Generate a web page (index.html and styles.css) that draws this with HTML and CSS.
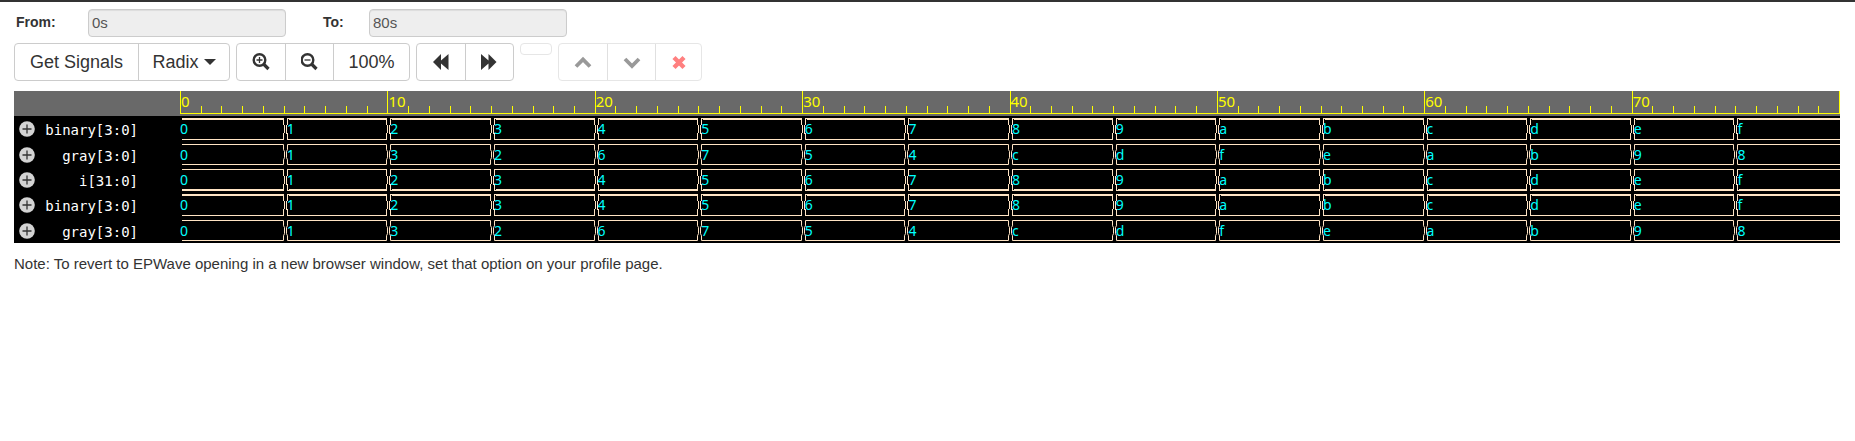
FILE: index.html
```
<!DOCTYPE html>
<html lang="en">
<head>
<meta charset="utf-8">
<title>EPWave</title>
<link rel="stylesheet" href="styles.css">
</head>
<body>
<main class="viewer">
  <form class="range">
    <label class="range-label" for="from">From:</label>
    <input class="range-input" id="from" type="text" value="0s" readonly>
    <label class="range-label range-label-to" for="to">To:</label>
    <input class="range-input" id="to" type="text" value="80s" readonly>
  </form>
  <div class="toolbar">
    <div class="group">
      <button class="btn btn-signals" type="button">Get Signals</button>
      <button class="btn btn-radix" type="button">Radix <span class="caret"></span></button>
    </div>
    <div class="group">
      <button class="btn btn-icon" type="button" aria-label="Zoom in"><svg class="icon" viewBox="0 0 18 18"><circle cx="7.500" cy="7" r="5.800" fill="none" stroke="#333" stroke-width="2.400"/><path d="M11.500 11l5 5" stroke="#333" stroke-width="3.200"/><path d="M4.500 7h6M7.500 4v6" stroke="#333" stroke-width="1.300"/></svg></button>
      <button class="btn btn-icon" type="button" aria-label="Zoom out"><svg class="icon" viewBox="0 0 18 18"><circle cx="6.500" cy="7" r="5.800" fill="none" stroke="#333" stroke-width="2.400"/><path d="M10.500 11l5 5" stroke="#333" stroke-width="3.200"/><path d="M3.500 7h6" stroke="#333" stroke-width="1.300"/></svg></button>
      <button class="btn btn-full" type="button">100%</button>
    </div>
    <div class="group">
      <button class="btn btn-icon" type="button" aria-label="Back"><svg class="icon" viewBox="0 0 18 18"><path d="M9 2v5.500L16.500 1v16L9 10.500V17L1 9 9 1z" fill="#333"/></svg></button>
      <button class="btn btn-icon" type="button" aria-label="Forward"><svg class="icon" viewBox="0 0 18 18"><path d="M7.500 2v5.500L0 1v16l7.500-6.500V17l8-8-8-8z" fill="#333"/></svg></button>
    </div>
    <button class="btn-empty" type="button" aria-label="Cursor" disabled></button>
    <div class="group group-disabled">
      <button class="btn btn-icon" type="button" aria-label="Move up" disabled><svg class="icon" viewBox="0 0 18 18"><path d="M2 13.500l7-7 7 7" fill="none" stroke="#999" stroke-width="3.800"/></svg></button>
      <button class="btn btn-icon" type="button" aria-label="Move down" disabled><svg class="icon" viewBox="0 0 18 18"><path d="M2 6l7 7 7-7" fill="none" stroke="#999" stroke-width="3.800"/></svg></button>
      <button class="btn btn-remove" type="button" aria-label="Remove" disabled><svg class="icon" viewBox="0 0 18 18"><path d="M4 4.500l10 10M14 4.500l-10 10" stroke="#ff8080" stroke-width="4.400"/></svg></button>
    </div>
  </div>
  <section class="wave" aria-label="Waveform">
    <div class="ruler"><div class="ruler-scale" id="scale"></div></div>
    <div id="signals"></div>
  </section>
  <p class="note">Note: To revert to EPWave opening in a new browser window, set that option on your profile page.</p>
</main>
<script src="wave.js"></script>
</body>
</html>
```
FILE: styles.css
```
* { box-sizing: border-box; }
body {
  margin: 0;
  border-top: 2px solid #333;
  background: #fff;
  color: #333;
  font: 15px/20px "Liberation Sans", Arial, sans-serif;
}
.viewer { padding: 7px 15px 0 14px; }
.range { display: flex; height: 28px; }
.range-label { width: 74px; padding: 3px 2px; font-size: 14px; font-weight: bold; }
.range-label-to { width: 48px; margin-left: 35px; }
.range-input {
  width: 198px;
  padding: 0 3px;
  border: 1px solid #ccc;
  border-radius: 4px;
  background: #eee;
  box-shadow: inset 0 1px 1px rgba(0, 0, 0, .075);
  color: #555;
  font: 15px/20px "Liberation Sans", Arial, sans-serif;
}
.toolbar { display: flex; align-items: flex-start; gap: 6px; margin-top: 6px; }
.group { display: flex; border: 1px solid #ccc; border-radius: 4px; }
.btn {
  display: flex;
  align-items: center;
  justify-content: center;
  height: 36px;
  padding: 0;
  border: 0;
  background: none;
  color: #333;
  font: 18px/24px "Liberation Sans", Arial, sans-serif;
}
.btn + .btn { border-left: 1px solid #ccc; }
.btn-signals { width: 123px; }
.btn-radix { width: 91px; gap: 5px; }
.btn-icon { width: 48px; }
.btn-full { width: 76px; }
.btn-remove { width: 46px; }
.icon { width: 18px; height: 18px; }
.caret { border: 6px solid transparent; border-top-color: #333; border-bottom: 0; }
.btn-empty { width: 32px; height: 12px; padding: 0; border: 1px solid #e6e6e6; border-radius: 4px; background: #fff; }
.group-disabled { border-color: #e6e6e6; }
.group-disabled .btn + .btn { border-color: #e0e0e0; }

.wave { margin-top: 10px; background: #000; }
.ruler { height: 25px; padding: 0 0 2px 166px; background: #696969; }
.ruler-scale {
  display: flex;
  height: 23px;
  border-right: 1px solid #ff0;
  border-bottom: 1px solid #ff0;
}
.decade {
  position: relative;
  flex: 1;
  display: flex;
  align-items: flex-end;
  border-left: 1px solid #ff0;
}
.decade-label {
  position: absolute;
  top: 0;
  left: 0;
  color: #ff0;
  font: 15px/20px "Noto Sans", sans-serif;
}
.tick { flex: 1; height: 7px; }
.tick + .tick { border-left: 1px solid #ff0; }

.signal { display: flex; height: 25px; padding-top: 2px; }
.signal:nth-child(3n + 1) { height: 26px; }
.signal-head { flex: none; display: flex; justify-content: space-between; width: 124px; padding-left: 5px; margin-right: 44px; }
.expand { width: 16px; height: 16px; padding: 0; border: 0; background: none; margin-top: 3px; }
.expand-icon { display: block; width: 16px; height: 16px; }
.signal-name { color: #fff; font: 14px/24px "DejaVu Sans Mono", monospace; }
.signal-track { flex: 1; display: flex; height: 21px; }
.signal-tall .signal-track { height: 22px; }
.cell { flex: 1; display: flex; }
.edge { flex: none; width: 3px; height: 100%; }
.edge-line { fill: none; stroke: #ffe4c4; vector-effect: non-scaling-stroke; }
.bus {
  flex: 1;
  border: solid #ffe4c4;
  border-width: 1px 0;
  color: #0ff;
  font: 14px/22px "Noto Sans", sans-serif;
}
.bus-value { display: block; margin: -1px 0 -2px -2px; }
.top-thick .bus { border-top-width: 2px; }
.top-thick .bus-value { margin-top: -2px; }
.bottom-thick .bus { border-bottom-width: 2px; }
.note { margin: 11px 0 0; }
```
FILE: wave.js
```
const counting = "0123456789abcdef";
const grayCode = "01326754cdfeab98";
const signals = [
  ["binary[3:0]", counting, "signal-tall top-thick"],
  ["gray[3:0]", grayCode, ""],
  ["i[31:0]", counting, "signal-tall bottom-thick"],
  ["binary[3:0]", counting, "signal-tall top-thick"],
  ["gray[3:0]", grayCode, ""]
];
const edge = d => `<svg class="edge" viewBox="0 0 3 20" preserveAspectRatio="none" shape-rendering="crispEdges"><path class="edge-line" d="${d}"/></svg>`;
const opening = edge("M3 .5h-1.500v5L.5 7v6l1 2v4.500H3");
const closing = edge("M0 .5h.5v5L1.500 7v6l-1 2v4.500H0");
const plus = `<svg class="expand-icon" viewBox="0 0 16 16"><circle cx="8" cy="8" r="7.800" fill="#d3d3d3"/><path d="M3.500 8h9M8 3.500v9" stroke="#333" stroke-width="1.300"/></svg>`;

document.getElementById("scale").innerHTML = Array.from({ length: 8 }, (_, i) =>
  `<div class="decade"><span class="decade-label">${i * 10}</span>${'<i class="tick"></i>'.repeat(10)}</div>`
).join("");

document.getElementById("signals").innerHTML = signals.map(([name, values, kind]) =>
  `<div class="signal ${kind}"><div class="signal-head"><button class="expand" type="button" aria-label="Expand ${name}">${plus}</button><span class="signal-name">${name}</span></div><div class="signal-track">${
    [...values].map((v, i) =>
      `<div class="cell">${i ? opening : ""}<div class="bus"><span class="bus-value">${v}</span></div>${i < 15 ? closing : ""}</div>`
    ).join("")
  }</div></div>`
).join("");
```
